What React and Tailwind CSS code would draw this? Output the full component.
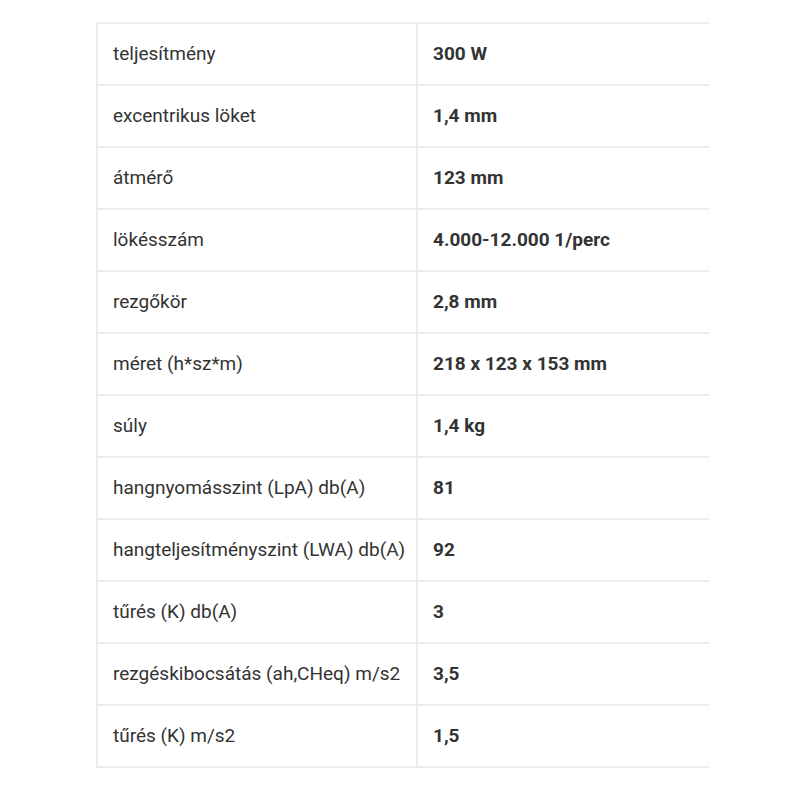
import React from "react";

const specs = [
  ["teljesítmény", "300 W"],
  ["excentrikus löket", "1,4 mm"],
  ["átmérő", "123 mm"],
  ["lökésszám", "4.000-12.000 1/perc"],
  ["rezgőkör", "2,8 mm"],
  ["méret (h*sz*m)", "218 x 123 x 153 mm"],
  ["súly", "1,4 kg"],
  ["hangnyomásszint (LpA) db(A)", "81"],
  ["hangteljesítményszint (LWA) db(A)", "92"],
  ["tűrés (K) db(A)", "3"],
  ["rezgéskibocsátás (ah,CHeq) m/s2", "3,5"],
  ["tűrés (K) m/s2", "1,5"],
];

const App = () => {
  return (
    <div className="w-[800px] h-[800px] bg-white pt-[22px] pl-[96px] font-['Roboto',sans-serif] text-[19px] text-[#333]">
      <div className="w-[613px] border-t-2 border-l-2 border-[#ececec]">
        {specs.map(([label, value], index) => (
          <div
            key={index}
            className="flex h-[62px] border-b-2 border-[#ececec]"
          >
            <div className="w-[320px] flex items-center pl-[15px] border-r-2 border-[#ececec]">
              {label}
            </div>
            <div className="flex-1 flex items-center pl-[15px] font-bold">
              {value}
            </div>
          </div>
        ))}
      </div>
    </div>
  );
};

export default App;
